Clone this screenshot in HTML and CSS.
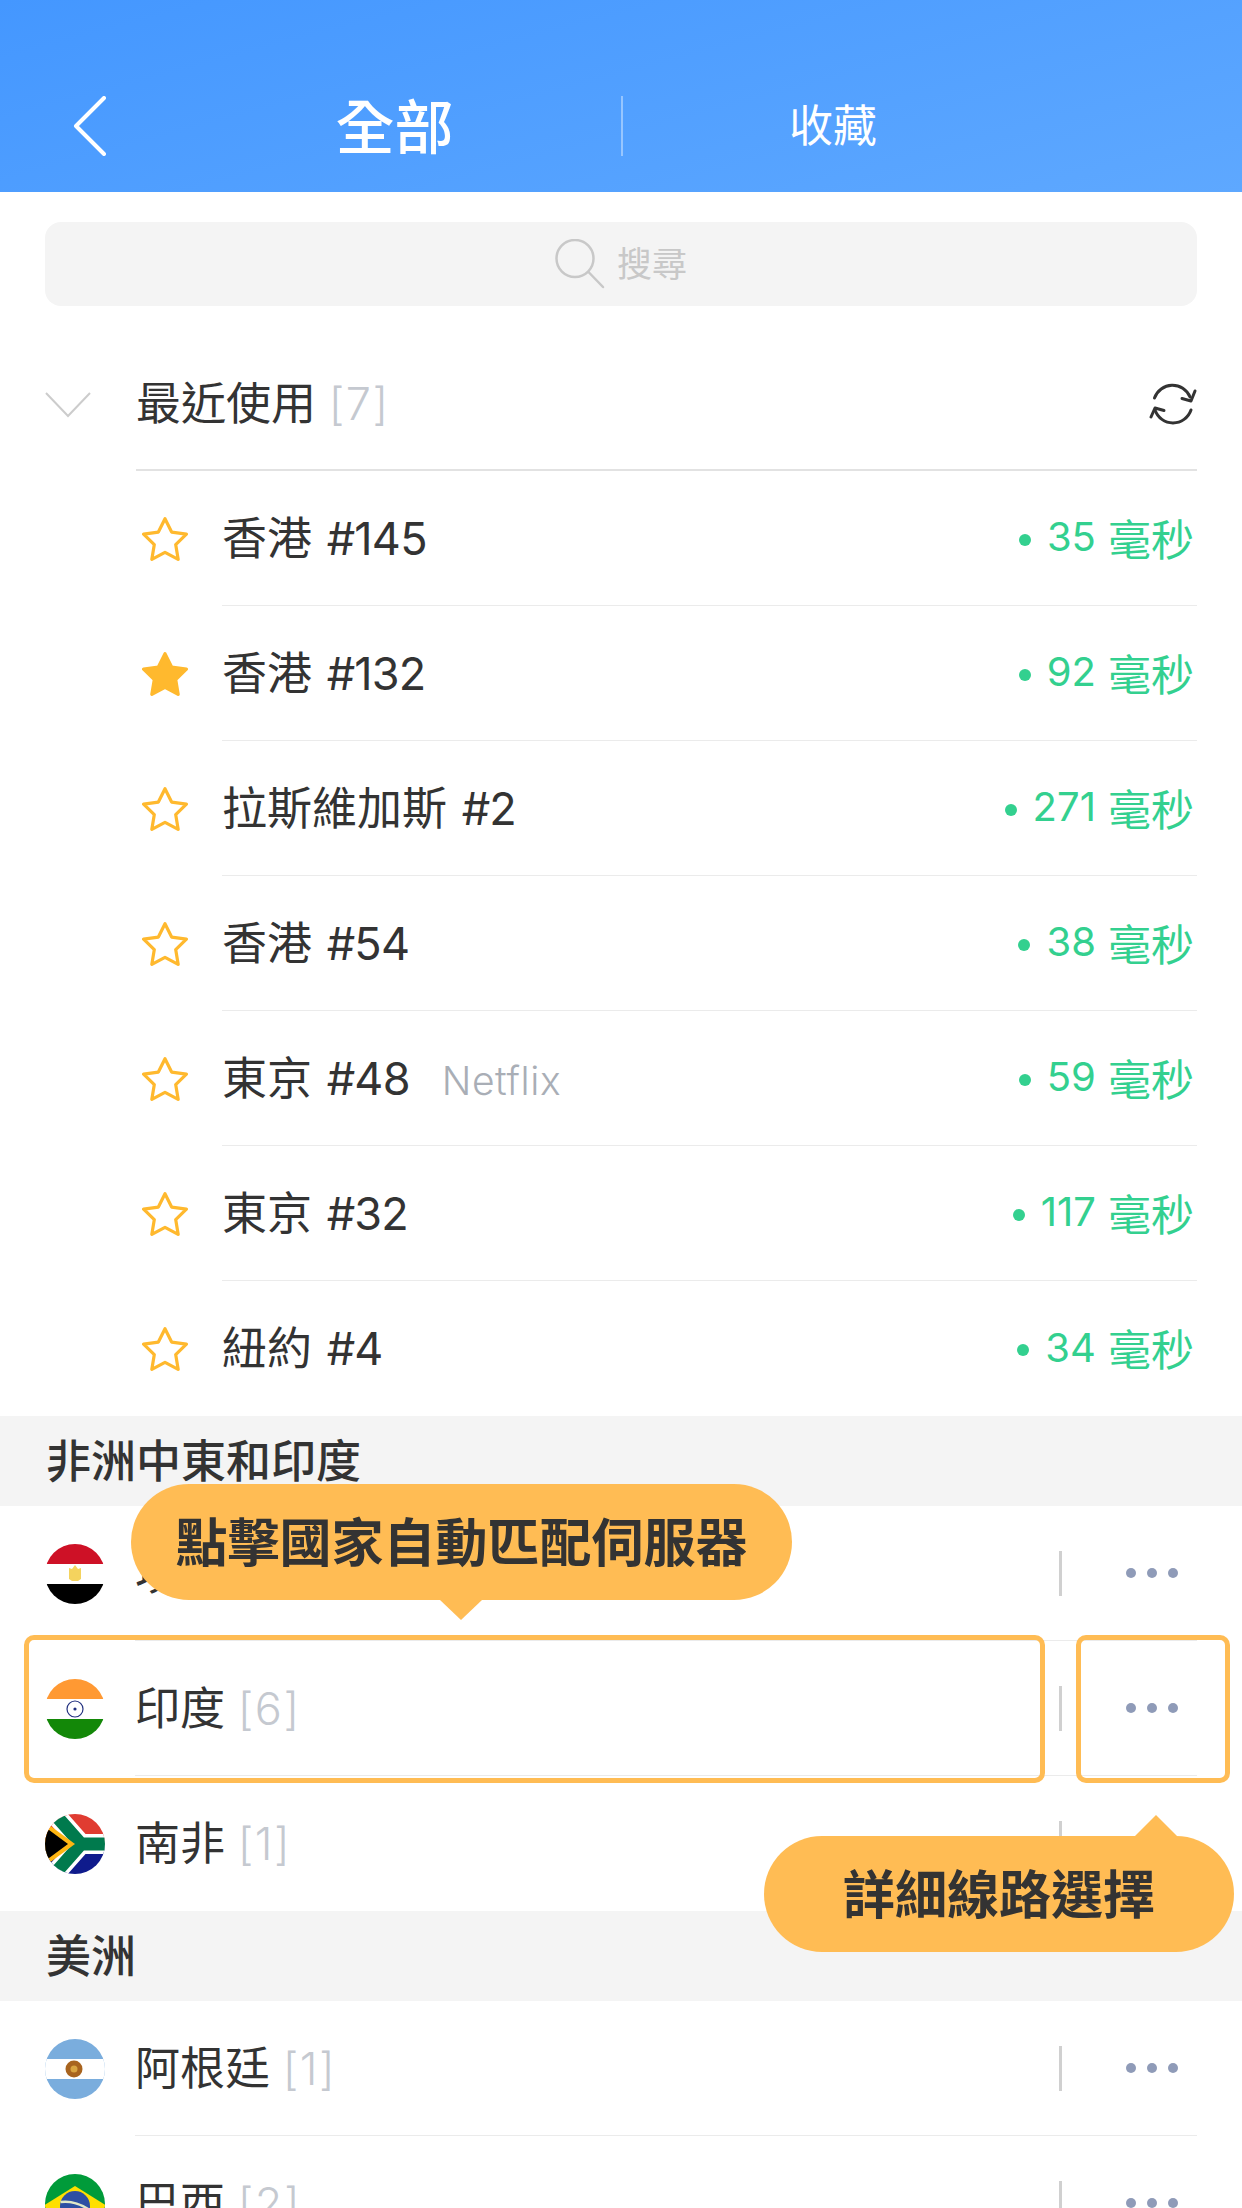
FILE: index.html
```html
<!DOCTYPE html>
<html lang="zh-Hant">
<head>
    <meta charset="UTF-8">
    <meta name="viewport" content="width=device-width, initial-scale=1.0">
    <title>全部</title>
    <link rel="stylesheet" href="styles.css">
</head>
<body>
    <svg class="defs" width="0" height="0">
        <symbol id="star" viewBox="1.5 1.5 43 41">
            <polygon points="23,3 29.2,15.5 43,17.5 33,27.2 35.3,41 23,34.5 10.7,41 13,27.2 3,17.5 16.8,15.5"/>
        </symbol>
    </svg>
    <div class="page">
        <header class="topbar">
            <svg class="back" width="36" height="60" viewBox="0 0 36 60">
                <polyline points="32,2 4,30 32,58"/>
            </svg>
            <div class="tab tab-active">全部</div>
            <div class="tab-sep"></div>
            <div class="tab">收藏</div>
        </header>

        <div class="search">
            <svg class="search-icon" width="50" height="50" viewBox="0 0 50 50">
                <circle cx="20" cy="19.5" r="18.5"/>
                <line x1="33.5" y1="33" x2="48" y2="48"/>
            </svg>
            <span class="search-text">搜尋</span>
        </div>

        <div class="recent-head">
            <svg class="caret" width="46" height="26" viewBox="0 0 46 26">
                <polyline points="1,1 23,24 45,1"/>
            </svg>
            <div class="recent-title">
                <span class="name">最近使用 <span class="count">[7]</span></span>
                <svg class="refresh" width="48" height="42" viewBox="0 0 48 42">
                    <path d="M5.5 15 A19 19 0 0 1 41 14"/>
                    <path d="M46 8 L42 18 L33 15.5"/>
                    <path d="M42 27 A19 19 0 0 1 6 27"/>
                    <path d="M2 34 L6 25 L15 27.5"/>
                </svg>
            </div>
        </div>

        <div class="server">
            <svg class="star" width="46" height="44"><use href="#star"/></svg>
            <div class="server-main">
                <span class="name">香港 <span class="num">#145</span></span>
                <span class="ping"><i></i><span class="ms">35</span> 毫秒</span>
            </div>
        </div>
        <div class="server">
            <svg class="star star-on" width="46" height="44"><use href="#star"/></svg>
            <div class="server-main">
                <span class="name">香港 <span class="num">#132</span></span>
                <span class="ping"><i></i><span class="ms">92</span> 毫秒</span>
            </div>
        </div>
        <div class="server">
            <svg class="star" width="46" height="44"><use href="#star"/></svg>
            <div class="server-main">
                <span class="name">拉斯維加斯 <span class="num">#2</span></span>
                <span class="ping"><i></i><span class="ms">271</span> 毫秒</span>
            </div>
        </div>
        <div class="server">
            <svg class="star" width="46" height="44"><use href="#star"/></svg>
            <div class="server-main">
                <span class="name">香港 <span class="num">#54</span></span>
                <span class="ping"><i></i><span class="ms">38</span> 毫秒</span>
            </div>
        </div>
        <div class="server">
            <svg class="star" width="46" height="44"><use href="#star"/></svg>
            <div class="server-main">
                <span class="name">東京 <span class="num">#48</span><span class="tag">Netflix</span></span>
                <span class="ping"><i></i><span class="ms">59</span> 毫秒</span>
            </div>
        </div>
        <div class="server">
            <svg class="star" width="46" height="44"><use href="#star"/></svg>
            <div class="server-main">
                <span class="name">東京 <span class="num">#32</span></span>
                <span class="ping"><i></i><span class="ms">117</span> 毫秒</span>
            </div>
        </div>
        <div class="server server-last">
            <svg class="star" width="46" height="44"><use href="#star"/></svg>
            <div class="server-main">
                <span class="name">紐約 <span class="num">#4</span></span>
                <span class="ping"><i></i><span class="ms">34</span> 毫秒</span>
            </div>
        </div>

        <div class="section">非洲中東和印度</div>

        <div class="country">
            <svg class="flag" width="60" height="60" viewBox="0 0 60 60">
                <rect width="60" height="20" fill="#ce1126"/>
                <rect y="20" width="60" height="20" fill="#fff"/>
                <rect y="40" width="60" height="20" fill="#000"/>
                <path d="M30 21 L33 25 L36 24 L36 35 L33 37 L27 37 L24 35 L24 24 L27 25 Z" fill="#f4d35e"/>
            </svg>
            <div class="country-main">
                <span class="name">埃及 <span class="count">[1]</span></span>
                <div class="more"><b></b><i></i><i></i><i></i></div>
            </div>
        </div>
        <div class="country">
            <svg class="flag" width="60" height="60" viewBox="0 0 60 60">
                <rect width="60" height="20" fill="#ff9933"/>
                <rect y="20" width="60" height="20" fill="#fff"/>
                <rect y="40" width="60" height="20" fill="#138808"/>
                <circle cx="30" cy="30" r="8" fill="none" stroke="#22307f" stroke-width="1.2"/>
                <circle cx="30" cy="30" r="1.6" fill="#22307f"/>
            </svg>
            <div class="country-main">
                <span class="name">印度 <span class="count">[6]</span></span>
                <div class="more"><b></b><i></i><i></i><i></i></div>
            </div>
        </div>
        <div class="country country-last">
            <svg class="flag" width="60" height="60" viewBox="0 0 60 60">
                <rect width="60" height="30" fill="#e03c31"/>
                <rect y="30" width="60" height="30" fill="#0f1b8c"/>
                <path d="M6 -4 L36 30 L6 64 M36 30 L64 30" fill="none" stroke="#fff" stroke-width="20"/>
                <path d="M6 -4 L36 30 L6 64 M36 30 L64 30" fill="none" stroke="#007a4d" stroke-width="13"/>
                <polygon points="0,8 30,30 0,52" fill="#ffb612"/>
                <polygon points="0,13 23,30 0,47" fill="#000"/>
            </svg>
            <div class="country-main">
                <span class="name">南非 <span class="count">[1]</span></span>
                <div class="more"><b></b><i></i><i></i><i></i></div>
            </div>
        </div>

        <div class="section">美洲</div>

        <div class="country">
            <svg class="flag" width="60" height="60" viewBox="0 0 60 60">
                <rect width="60" height="60" fill="#7aaddd"/>
                <rect y="20" width="60" height="20" fill="#fff"/>
                <circle cx="29" cy="30" r="8.5" fill="#a8641f"/>
                <circle cx="29" cy="30" r="3.5" fill="#d9a441"/>
            </svg>
            <div class="country-main">
                <span class="name">阿根廷 <span class="count">[1]</span></span>
                <div class="more"><b></b><i></i><i></i><i></i></div>
            </div>
        </div>
        <div class="country">
            <svg class="flag" width="60" height="60" viewBox="0 0 60 60">
                <rect width="60" height="60" fill="#009b3a"/>
                <polygon points="30,12 62,32 30,52 -2,32" fill="#fedf00"/>
                <circle cx="30" cy="32" r="15" fill="#2d4fa3"/>
                <path d="M15.5 28 Q30 26 44.5 36" fill="none" stroke="#dfe8c8" stroke-width="2.5"/>
            </svg>
            <div class="country-main">
                <span class="name">巴西 <span class="count">[2]</span></span>
                <div class="more"><b></b><i></i><i></i><i></i></div>
            </div>
        </div>

        <!-- guide overlay -->
        <div class="mark mark-row"></div>
        <div class="mark mark-more"></div>
        <div class="tip tip-row">點擊國家自動匹配伺服器</div>
        <div class="tip tip-more">詳細線路選擇</div>
    </div>
</body>
</html>
```

FILE: styles.css
```css
body {
    margin: 0;
    font-family: Inter, "Noto Sans CJK TC", sans-serif;
    color: #333;
    background-color: #fff;
}
.defs {
    position: absolute;
}
.page {
    position: relative;
    width: 1242px;
    height: 2208px;
    overflow: hidden;
}

/* top bar */
.topbar {
    display: flex;
    align-items: center;
    height: 192px;
    box-sizing: border-box;
    padding-top: 60px;
    background: linear-gradient(165deg, #4497ff 0%, #5ea8ff 100%);
    color: #fff;
}
.back {
    margin-left: 72px;
    flex: none;
}
.back polyline {
    fill: none;
    stroke: #fff;
    stroke-width: 4;
    stroke-linecap: round;
    stroke-linejoin: round;
}
.tab {
    width: 420px;
    padding-bottom: 6px;
    text-align: center;
    font-size: 44px;
}
.tab-active {
    width: 453px;
    margin-left: 60px;
    font-size: 59px;
    font-weight: 500;
}
.tab-sep {
    width: 2px;
    height: 60px;
    background-color: rgba(255,255,255,0.4);
}

/* search */
.search {
    display: flex;
    align-items: center;
    justify-content: center;
    gap: 12px;
    height: 84px;
    margin: 30px 45px 32px;
    background-color: #f4f4f4;
    border-radius: 16px;
    color: #c8c8c8;
    font-size: 35px;
}
.search-text {
    padding-bottom: 6px;
}
.search-icon circle, .search-icon line {
    fill: none;
    stroke: #c8c8c8;
    stroke-width: 2.5;
    stroke-linecap: round;
}

/* recent group */
.recent-head {
    display: flex;
    align-items: center;
    height: 133px;
    padding-left: 45px;
}
.caret {
    flex: none;
    margin-right: 45px;
}
.caret polyline {
    fill: none;
    stroke: #ccc;
    stroke-width: 2;
}
.recent-title {
    display: flex;
    align-items: center;
    justify-content: space-between;
    box-sizing: border-box;
    width: 1061px;
    height: 100%;
    border-bottom: 2px solid #e2e2e2;
}
.refresh path {
    fill: none;
    stroke: #333;
    stroke-width: 3;
    stroke-linecap: round;
    stroke-linejoin: round;
}
.name {
    padding-bottom: 6px;
    font-size: 45px;
    white-space: nowrap;
}
.num {
    margin-left: 2px;
    letter-spacing: -0.8px;
}
.count {
    color: #c5c9d0;
    font-weight: 300;
    letter-spacing: 1.5px;
}
.tag {
    margin-left: 32px;
    font-size: 39px;
    font-weight: 300;
    letter-spacing: 0.6px;
    color: #a9aeb6;
}
.server {
    display: flex;
    align-items: center;
    height: 135px;
    padding-left: 142px;
}
.star {
    flex: none;
    margin-right: 34px;
    fill: none;
    stroke: #ffb92e;
    stroke-width: 3;
    stroke-linejoin: round;
}
.star-on {
    fill: #ffb92e;
}
.server-main {
    display: flex;
    align-items: center;
    justify-content: space-between;
    box-sizing: border-box;
    width: 975px;
    height: 100%;
    padding-right: 3px;
    border-bottom: 1.5px solid #ebebeb;
}
.server-last .server-main, .country-last .country-main {
    border-bottom: none;
}
.ping {
    display: flex;
    align-items: center;
    padding-bottom: 3px;
    font-size: 43px;
    color: #33d08f;
    white-space: pre;
}
.ms {
    font-size: 40px;
}
.ping i {
    width: 12px;
    height: 12px;
    margin-top: 6px;
    margin-right: 16px;
    border-radius: 50%;
    background-color: #33d08f;
}

/* regions */
.section {
    height: 90px;
    line-height: 92px;
    padding-left: 46px;
    background-color: #f4f4f4;
    font-size: 45px;
    font-weight: 500;
}
.country {
    display: flex;
    align-items: center;
    height: 135px;
    padding-left: 45px;
}
.flag {
    flex: none;
    margin-right: 30px;
    border-radius: 50%;
}
.country-main {
    display: flex;
    align-items: center;
    justify-content: space-between;
    box-sizing: border-box;
    width: 1062px;
    height: 100%;
    border-bottom: 1.5px solid #ebebeb;
}
.more {
    display: flex;
    align-items: center;
    gap: 11px;
    width: 138px;
    box-sizing: border-box;
}
.more b {
    width: 3px;
    height: 45px;
    margin-right: 53px;
    background-color: #d0d0d0;
}
.more i {
    width: 10px;
    height: 10px;
    border-radius: 50%;
    background-color: #8f9bb8;
}

/* guide overlay */
.mark {
    position: absolute;
    top: 1635px;
    height: 148px;
    box-sizing: border-box;
    border: 5px solid #ffbc54;
    border-radius: 10px;
}
.mark-row {
    left: 24px;
    width: 1021px;
}
.mark-more {
    left: 1076px;
    width: 154px;
}
.tip {
    position: absolute;
    height: 116px;
    line-height: 120px;
    border-radius: 58px;
    background-color: #ffbc54;
    text-align: center;
    font-size: 52px;
    font-weight: 700;
    color: #333;
}
.tip::after {
    content: "";
    position: absolute;
    width: 0;
    height: 0;
    border-left: 21px solid transparent;
    border-right: 21px solid transparent;
}
.tip-row {
    left: 131px;
    top: 1484px;
    width: 661px;
}
.tip-row::after {
    left: 309px;
    top: 116px;
    border-top: 20px solid #ffbc54;
}
.tip-more {
    left: 764px;
    top: 1836px;
    width: 470px;
}
.tip-more::after {
    left: 371px;
    top: -21px;
    border-bottom: 21px solid #ffbc54;
}
```
